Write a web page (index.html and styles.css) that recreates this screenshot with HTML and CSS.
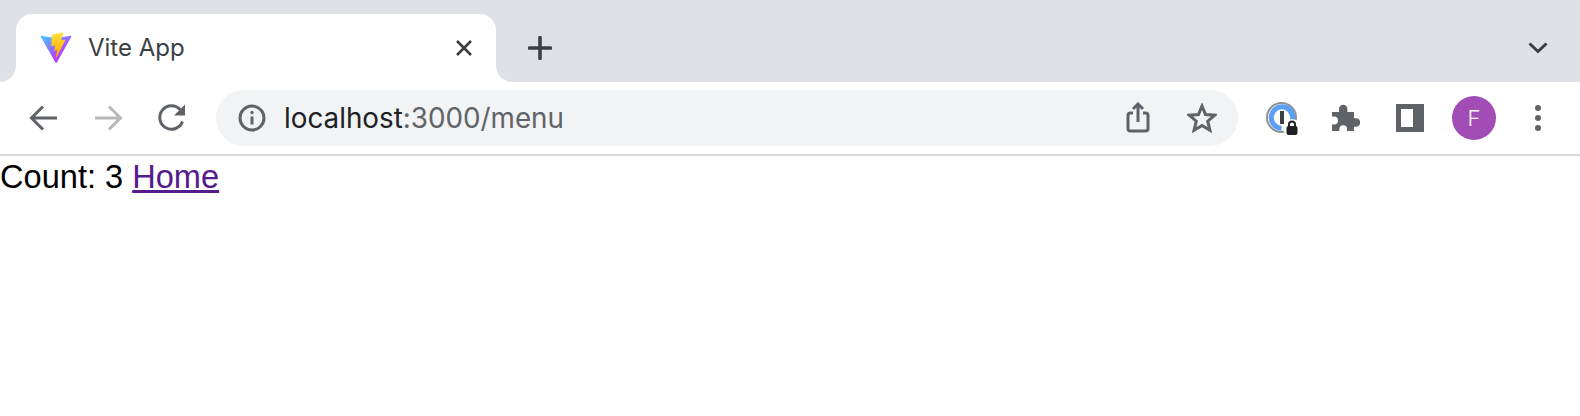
FILE: index.html
```html
<!DOCTYPE html>
<html lang="en">
<head>
    <meta charset="UTF-8">
    <title>Vite App</title>
    <link rel="stylesheet" href="styles.css">
</head>
<body>
    <div class="tab-strip">
        <div class="strip-start"></div>
        <div class="tab-slot">
            <div class="tab">
                <svg class="favicon" viewBox="0 0 410 404">
                    <defs>
                        <linearGradient id="viteBody" gradientUnits="userSpaceOnUse" x1="6" y1="33" x2="235" y2="344">
                            <stop offset="0" stop-color="#41d1ff"/>
                            <stop offset="1" stop-color="#bd34fe"/>
                        </linearGradient>
                        <linearGradient id="viteBolt" gradientUnits="userSpaceOnUse" x1="194.650" y1="8.820" x2="236.080" y2="292.990">
                            <stop offset="0" stop-color="#ffea83"/>
                            <stop offset="0.083" stop-color="#ffdd35"/>
                            <stop offset="1" stop-color="#ffa800"/>
                        </linearGradient>
                    </defs>
                    <path fill="url(#viteBody)" d="M399.641 59.525 215.643 388.545C211.844 395.338 202.084 395.378 198.228 388.618L10.582 59.556C6.381 52.190 12.680 43.267 21.028 44.759L205.223 77.682C206.398 77.892 207.601 77.890 208.776 77.676L389.119 44.806C397.439 43.289 403.768 52.143 399.641 59.525Z"/>
                    <path fill="url(#viteBolt)" d="M292.965 1.574 156.801 28.255C154.563 28.694 152.906 30.590 152.771 32.866L144.395 174.330C144.198 177.662 147.258 180.248 150.510 179.498L188.420 170.749C191.967 169.931 195.172 173.055 194.443 176.622L183.180 231.775C182.422 235.487 185.907 238.661 189.532 237.560L212.947 230.446C216.577 229.344 220.065 232.527 219.297 236.242L201.398 322.875C200.278 328.294 207.486 331.249 210.492 326.603L212.500 323.500 323.454 102.072C325.312 98.365 322.108 94.137 318.036 94.923L279.014 102.454C275.347 103.161 272.227 99.746 273.262 96.158L298.731 7.867C299.767 4.273 296.636 0.855 292.965 1.574Z"/>
                </svg>
                <span class="tab-title">Vite App</span>
                <svg class="tab-close" viewBox="0 0 16 16">
                    <path d="M1 1 15 15M15 1 1 15"/>
                </svg>
            </div>
        </div>
        <div class="strip-rest">
            <svg class="new-tab" viewBox="0 0 24 24">
                <path d="M12 1.500V22.500M1.500 12H22.500"/>
            </svg>
            <svg class="tab-search" viewBox="0 0 20 12">
                <path d="M1.500 1.500 10 9.500 18.500 1.500"/>
            </svg>
        </div>
    </div>

    <div class="toolbar">
        <button class="nav-btn">
            <svg viewBox="0 0 32 32" class="line-icon"><path d="M29 16H4M15 4.500 3.500 16 15 27.500"/></svg>
        </button>
        <button class="nav-btn nav-off">
            <svg viewBox="0 0 32 32" class="line-icon"><path d="M3 16H28M17 4.500 28.500 16 17 27.500"/></svg>
        </button>
        <button class="nav-btn">
            <svg viewBox="0 0 32 32" class="line-icon">
                <path d="M26.500 19.500A11.700 11.700 0 1 1 24.300 7.800"/>
                <path class="solid" d="M29 2.500V13.500H18Z"/>
            </svg>
        </button>

        <div class="omnibox">
            <svg class="omni-info line-icon" viewBox="0 0 28 28">
                <circle cx="14" cy="14" r="12"/>
                <path d="M14 12.500V20.500"/>
                <circle class="solid" cx="14" cy="8.500" r="1.700"/>
            </svg>
            <span class="url"><span class="url-host">localhost</span>:3000/menu</span>
            <svg class="omni-share line-icon" viewBox="0 0 24 32">
                <path d="M7 11H4.500A2.500 2.500 0 0 0 2 13.500V26.500A2.500 2.500 0 0 0 4.500 29H19.500A2.500 2.500 0 0 0 22 26.500V13.500A2.500 2.500 0 0 0 19.500 11H17"/>
                <path d="M12 20V2.500M7 7 12 2 17 7"/>
            </svg>
            <svg class="omni-star line-icon" viewBox="0 0 30 30">
                <path d="M15 3 18.500 11.500 27.700 12.200 20.700 18.200 22.900 27.200 15 22.400 7.100 27.200 9.300 18.200 2.300 12.200 11.500 11.500Z"/>
            </svg>
        </div>

        <div class="extensions">
            <svg class="ext-onepass" viewBox="0 0 34 34">
                <circle class="op-outer" cx="15.500" cy="15.500" r="14.500"/>
                <path class="op-blue" d="M24.500 22A10.700 10.700 0 1 0 15.500 26.200"/>
                <rect class="op-bar" x="14" y="9" width="4" height="13"/>
                <circle class="op-clear" cx="26" cy="26" r="9"/>
                <rect class="op-lock" x="20.500" y="24" width="11" height="9" rx="2"/>
                <path class="op-shackle" d="M23 25V22.500A3 3 0 0 1 29 22.500V25"/>
            </svg>
            <svg class="ext-puzzle" viewBox="0 0 30 30">
                <path d="M2 9H9V6A4.200 4.200 0 0 1 17.400 6V9H24V15.200H26A4.300 4.300 0 0 1 26 23.800H24V28H17V26A3.800 3.800 0 0 0 9.400 26V28H2V21.500H4A4 4 0 0 0 4 13.500H2Z"/>
            </svg>
            <div class="ext-panel"></div>
            <div class="avatar">F</div>
            <div class="chrome-menu"><span></span><span></span><span></span></div>
        </div>
    </div>

    <div class="page">Count: 3 <a href="#">Home</a></div>
</body>
</html>
```

FILE: styles.css
```css
* { box-sizing: border-box; }
body { margin: 0; background: #fff; font-family: "Liberation Sans", Arial, sans-serif; overflow: hidden; }
svg { display: block; flex: none; }

.tab-strip { display: flex; height: 82px; background: #fff; }
.strip-start { width: 16px; background: #dfe1e6; border-bottom-right-radius: 16px; }
.tab-slot { width: 480px; padding-top: 14px; background: #dfe1e6; }
.tab { display: flex; align-items: center; height: 68px; padding: 0 24px; background: #fff; border-radius: 16px 16px 0 0; }
.favicon { width: 32px; height: 32px; margin-right: 16px; margin-top: -1px; }
.tab-title { flex: 1; margin-top: -2px; font-family: Inter, "Liberation Sans", sans-serif; font-size: 24px; color: #3c4043; }
.tab-close { width: 16px; height: 16px; fill: none; stroke: #3c4043; stroke-width: 2.6; }
.strip-rest { flex: 1; display: flex; align-items: center; justify-content: space-between; padding: 14px 32px 0 32px; background: #dfe1e6; border-bottom-left-radius: 16px; }
.new-tab { width: 24px; height: 24px; fill: none; stroke: #3c4043; stroke-width: 3.6; stroke-linecap: round; }
.tab-search { width: 20px; height: 12px; fill: none; stroke: #3c4043; stroke-width: 3; }

.toolbar { display: flex; align-items: center; height: 74px; padding: 0 0 0 12px; border-bottom: 2px solid #d9d9db; }
.nav-btn { width: 64px; height: 56px; padding: 0; border: none; background: none; display: flex; align-items: center; justify-content: center; }
.nav-btn svg { width: 32px; height: 32px; }
.nav-off { opacity: 0.45; }
.line-icon { fill: none; stroke: #5f6368; stroke-width: 3; }
.line-icon .solid { fill: #5f6368; stroke: none; }

.omnibox { display: flex; align-items: center; width: 1022px; height: 56px; margin-left: 12px; padding: 0 21px 0 22px; background: #f1f3f4; border-radius: 28px; }
.omni-info { width: 28px; height: 28px; }
.url { flex: 1; margin-left: 18px; font-family: Inter, "Liberation Sans", sans-serif; font-size: 27.8px; color: #5f6368; }
.url-host { color: #202124; }
.omni-share { width: 24px; height: 32px; margin-right: 37px; }
.omni-star { width: 30px; height: 30px; }

.extensions { flex: 1; display: flex; align-items: center; padding-left: 28px; }
.ext-onepass { width: 34px; height: 34px; margin-top: 2px; }
.op-outer { fill: none; stroke: #8e9195; stroke-width: 2; }
.op-blue { fill: none; stroke: #5b9ef5; stroke-width: 5; }
.op-bar { fill: #3c4043; }
.op-clear { fill: #fff; }
.op-lock { fill: #202124; }
.op-shackle { fill: none; stroke: #202124; stroke-width: 2; }
.ext-puzzle { width: 30px; height: 30px; margin-left: 30px; fill: #5f6368; }
.ext-panel { width: 28px; height: 28px; margin-left: 36px; background: #fff; border: solid #5f6368; border-width: 5px 11px 5px 5px; }
.avatar { width: 44px; height: 44px; margin-left: 28px; border-radius: 50%; background: #a24db5; color: #fff; font-family: Inter, "Liberation Sans", sans-serif; font-size: 22px; font-weight: 300; line-height: 44px; text-align: center; }
.chrome-menu { display: flex; flex-direction: column; gap: 4px; margin-left: 39px; }
.chrome-menu span { width: 6px; height: 6px; border-radius: 50%; background: #5f6368; }

.page { padding-top: 2px; font-size: 32.6px; line-height: 37px; color: #000; }
.page a { color: #551a8b; }
```
